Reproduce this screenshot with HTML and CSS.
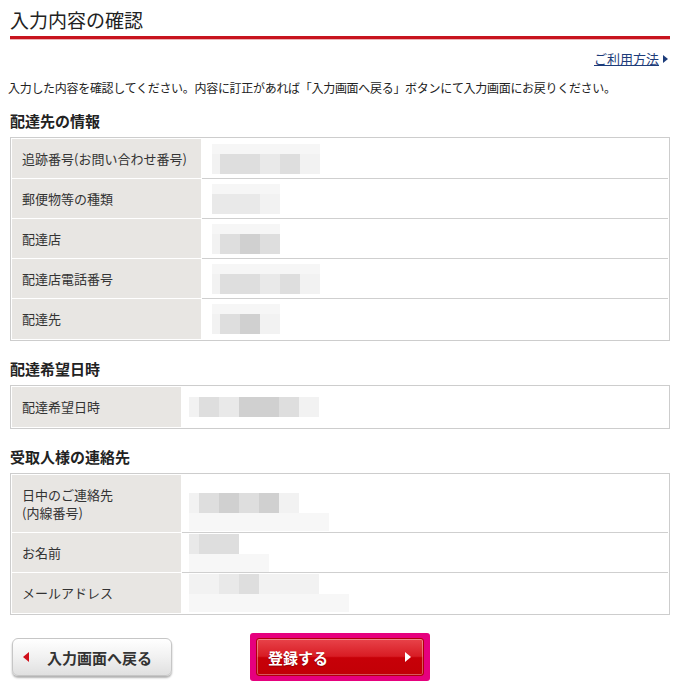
FILE: index.html
```html
<!DOCTYPE html>
<html lang="ja">
<head>
  <meta charset="UTF-8">
  <title>入力内容の確認</title>
  <link rel="stylesheet" href="styles.css">
</head>
<body>
  <div class="confirm-page">
    <h1 class="confirm-title">入力内容の確認</h1>

    <div class="confirm-help">
      <a href="#" class="confirm-help-link">ご利用方法</a>
      <span class="confirm-help-arrow"></span>
    </div>

    <p class="confirm-lead">入力した内容を確認してください。内容に訂正があれば「入力画面へ戻る」ボタンにて入力画面にお戻りください。</p>

    <div class="confirm-section confirm-section-first">
      <h2 class="confirm-heading">配達先の情報</h2>
      <table class="confirm-table confirm-table-wide">
        <tr>
          <th>追跡番号(お問い合わせ番号)</th>
          <td><span class="mosaic mosaic-tall"><i class="edge s1"></i><i class="s3"></i><i class="s3"></i><i class="s2"></i><i class="s3"></i><i class="s1"></i></span></td>
        </tr>
        <tr>
          <th>郵便物等の種類</th>
          <td><span class="mosaic mosaic-tall"><i class="edge s2"></i><i class="s2"></i><i class="s2"></i><i class="s1"></i></span></td>
        </tr>
        <tr>
          <th>配達店</th>
          <td><span class="mosaic mosaic-tall"><i class="edge s1"></i><i class="s3"></i><i class="s4"></i><i class="s3"></i></span></td>
        </tr>
        <tr>
          <th>配達店電話番号</th>
          <td><span class="mosaic mosaic-tall"><i class="edge s1"></i><i class="s3"></i><i class="s3"></i><i class="s2"></i><i class="s3"></i><i class="s1"></i></span></td>
        </tr>
        <tr>
          <th>配達先</th>
          <td><span class="mosaic mosaic-tall"><i class="edge s1"></i><i class="s3"></i><i class="s4"></i><i class="s1"></i></span></td>
        </tr>
      </table>
    </div>

    <div class="confirm-section">
      <h2 class="confirm-heading">配達希望日時</h2>
      <table class="confirm-table">
        <tr>
          <th>配達希望日時</th>
          <td><span class="mosaic"><i class="edge s1"></i><i class="s3"></i><i class="s2"></i><i class="s4"></i><i class="s4"></i><i class="s3"></i><i class="s1"></i></span></td>
        </tr>
      </table>
    </div>

    <div class="confirm-section">
      <h2 class="confirm-heading">受取人様の連絡先</h2>
      <table class="confirm-table">
        <tr class="confirm-row-double">
          <th>日中のご連絡先<br>(内線番号)</th>
          <td><span class="mosaic mosaic-low mosaic-drop"><i class="edge s1"></i><i class="s3"></i><i class="s4"></i><i class="s3"></i><i class="s4"></i><i class="s1"></i></span></td>
        </tr>
        <tr>
          <th>お名前</th>
          <td><span class="mosaic mosaic-low"><i class="edge s2"></i><i class="s3"></i><i class="s3"></i></span></td>
        </tr>
        <tr>
          <th>メールアドレス</th>
          <td><span class="mosaic mosaic-low"><i class="edge s1"></i><i class="s1"></i><i class="s2"></i><i class="s3"></i><i class="s1"></i><i class="s1"></i><i class="s1"></i></span></td>
        </tr>
      </table>
    </div>

    <div class="confirm-actions">
      <button class="btn-back" type="button"><span class="btn-back-arrow"></span>入力画面へ戻る</button>
      <div class="btn-submit-frame">
        <button class="btn-submit" type="button">登録する<span class="btn-submit-arrow"></span></button>
      </div>
    </div>
  </div>
</body>
</html>
```

FILE: styles.css
```css
body {
  margin: 0;
  background: #fff;
  color: #333;
  font-family: "Noto Sans CJK JP", "Noto Sans", sans-serif;
  font-size: 12px;
}

.confirm-page {
  width: 660px;
  padding: 0 10px;
}

.confirm-title {
  margin: 0;
  padding: 8px 0 4px;
  font-size: 19px;
  line-height: 24px;
  font-weight: normal;
  color: #222;
  border-bottom: 3px solid #c8141e;
  box-shadow: 0 1px 0 #eeb4b8;
}

.confirm-help {
  margin-top: 12px;
  display: flex;
  justify-content: flex-end;
  align-items: center;
  gap: 4px;
  padding-right: 2px;
  line-height: 16px;
}

.confirm-help-link {
  color: #1d3c7a;
  font-size: 13px;
}

.confirm-help-arrow {
  width: 0;
  height: 0;
  border-top: 4px solid transparent;
  border-bottom: 4px solid transparent;
  border-left: 5px solid #1d3c7a;
}

.confirm-lead {
  margin: 13px 0 0 -2px;
  line-height: 16px;
  font-size: 12px;
  letter-spacing: -0.3px;
  color: #222;
}

.confirm-section {
  margin-top: 20px;
}

.confirm-section-first {
  margin-top: 17px;
}

.confirm-heading {
  margin: 0 0 8px;
  font-size: 15px;
  line-height: 16px;
  font-weight: bold;
  color: #222;
}

.confirm-table {
  width: 660px;
  border: 1px solid #cdcdcd;
  border-collapse: separate;
  border-spacing: 0;
  padding: 1px;
}

.confirm-table th,
.confirm-table td {
  box-sizing: border-box;
  height: 40px;
  padding: 0;
  vertical-align: middle;
  font-size: 13px;
  line-height: 18px;
  font-weight: normal;
  text-align: left;
}

.confirm-table th {
  width: 170px;
  padding-left: 10px;
  background: #e8e6e3;
  color: #333;
  border-bottom: 1px solid #fff;
  border-right: 1px solid #fff;
}

.confirm-table td {
  padding-left: 7px;
  border-bottom: 1px solid #cfcfcf;
  font-size: 0;
  line-height: 0;
}

.confirm-table tr:last-child th,
.confirm-table tr:last-child td {
  border-bottom: none;
}

.confirm-table-wide th {
  width: 190px;
}

.confirm-table-wide td {
  padding-left: 10px;
}

.confirm-row-double th,
.confirm-row-double td {
  height: 58px;
}

/* blurred values */
.mosaic {
  display: inline-flex;
  vertical-align: middle;
}

.mosaic i {
  display: block;
  width: 20px;
  height: 20px;
}

.mosaic i.edge {
  width: 10px;
}

.confirm-table-wide .mosaic i.edge {
  width: 8px;
}

.mosaic-tall i {
  height: 30px;
  box-shadow: inset 0 10px 0 #f6f6f6;
}

.mosaic-low {
  padding-bottom: 18px;
  padding-right: 30px;
  background: linear-gradient(#fff 0, #fff 20px, #f7f7f7 20px);
}

.mosaic-drop {
  margin-top: 17px;
}

.s1 { background: #f2f2f2; }
.s2 { background: #e9e9e9; }
.s3 { background: #dedede; }
.s4 { background: #d0d0d0; }

.confirm-actions {
  margin-top: 18px;
  padding-left: 2px;
  display: flex;
  align-items: center;
  gap: 78px;
}

.btn-back {
  box-sizing: border-box;
  width: 160px;
  height: 38px;
  display: flex;
  align-items: center;
  gap: 18px;
  padding: 0 0 0 10px;
  border: 1px solid #c6c6c6;
  border-radius: 6px;
  background: linear-gradient(#ffffff, #f1f1f1 50%, #e0e0e0);
  box-shadow: 0 2px 2px rgba(0, 0, 0, 0.3);
  font-family: "Noto Sans CJK JP", sans-serif;
  font-size: 15px;
  font-weight: bold;
  color: #333;
}

.btn-back-arrow {
  width: 0;
  height: 0;
  border-top: 5px solid transparent;
  border-bottom: 5px solid transparent;
  border-right: 6px solid #d0101b;
}

.btn-submit-frame {
  padding: 5px 6px;
  background: #e6007e;
  border-radius: 3px;
}

.btn-submit {
  box-sizing: border-box;
  width: 168px;
  height: 38px;
  display: flex;
  align-items: center;
  justify-content: space-between;
  padding: 0 12px 0 11px;
  border: 1px solid #b0000a;
  border-radius: 3px;
  background: linear-gradient(#e8434a, #d81c24 48%, #c70008 52%, #c20006);
  box-shadow: inset 0 0 0 1px rgba(255, 255, 255, 0.35);
  font-family: "Noto Sans CJK JP", sans-serif;
  font-size: 15px;
  font-weight: bold;
  color: #fff;
  text-shadow: 0 1px 1px rgba(0, 0, 0, 0.3);
}

.btn-submit-arrow {
  width: 0;
  height: 0;
  border-top: 5px solid transparent;
  border-bottom: 5px solid transparent;
  border-left: 6px solid #fff;
}
```
